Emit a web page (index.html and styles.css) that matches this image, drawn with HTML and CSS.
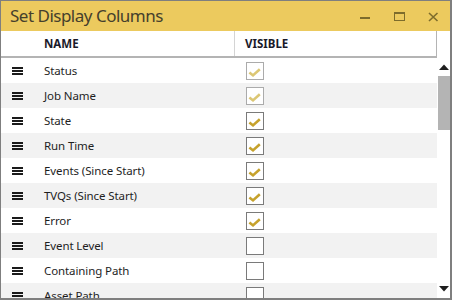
FILE: index.html
```html
<!DOCTYPE html>
<html>
<head>
<meta charset="utf-8">
<link rel="stylesheet" href="styles.css">
</head>
<body>
<div class="window">
  <div class="titlebar">
    <div class="title">Set Display Columns</div>
    <div class="controls">
      <svg class="ctl" width="11" height="10" viewBox="0 0 11 10"><rect x="0" y="5" width="10" height="2" fill="#7d6c2c"/></svg>
      <svg class="ctl" width="11" height="10" viewBox="0 0 11 10"><rect x="0.5" y="0.5" width="10" height="8" fill="none" stroke="#7d6c2c"/><rect x="0" y="0" width="11" height="2" fill="#7d6c2c"/></svg>
      <svg class="ctl" width="11" height="10" viewBox="0 0 11 10"><path d="M1 1 L9.5 9 M9.5 1 L1 9" stroke="#7d6c2c" stroke-width="1.6"/></svg>
    </div>
  </div>
  <div class="header">
    <div class="hcell hname">NAME</div>
    <div class="hcell hvis">VISIBLE</div>
  </div>
  <div class="body">
    <div class="rows">
      <div class="row"><span class="grip"></span><span class="name">Status</span><span class="cb disabled"><svg width="16" height="16" viewBox="0 0 16 16"><path d="M2.4 9.4 L6 12.4 L12.8 6.2" fill="none" stroke-width="2.6"/></svg></span></div>
      <div class="row"><span class="grip"></span><span class="name">Job Name</span><span class="cb disabled"><svg width="16" height="16" viewBox="0 0 16 16"><path d="M2.4 9.4 L6 12.4 L12.8 6.2" fill="none" stroke-width="2.6"/></svg></span></div>
      <div class="row"><span class="grip"></span><span class="name">State</span><span class="cb"><svg width="16" height="16" viewBox="0 0 16 16"><path d="M2.4 9.4 L6 12.4 L12.8 6.2" fill="none" stroke-width="2.6"/></svg></span></div>
      <div class="row"><span class="grip"></span><span class="name">Run Time</span><span class="cb"><svg width="16" height="16" viewBox="0 0 16 16"><path d="M2.4 9.4 L6 12.4 L12.8 6.2" fill="none" stroke-width="2.6"/></svg></span></div>
      <div class="row"><span class="grip"></span><span class="name">Events (Since Start)</span><span class="cb"><svg width="16" height="16" viewBox="0 0 16 16"><path d="M2.4 9.4 L6 12.4 L12.8 6.2" fill="none" stroke-width="2.6"/></svg></span></div>
      <div class="row"><span class="grip"></span><span class="name">TVQs (Since Start)</span><span class="cb"><svg width="16" height="16" viewBox="0 0 16 16"><path d="M2.4 9.4 L6 12.4 L12.8 6.2" fill="none" stroke-width="2.6"/></svg></span></div>
      <div class="row"><span class="grip"></span><span class="name">Error</span><span class="cb"><svg width="16" height="16" viewBox="0 0 16 16"><path d="M2.4 9.4 L6 12.4 L12.8 6.2" fill="none" stroke-width="2.6"/></svg></span></div>
      <div class="row"><span class="grip"></span><span class="name">Event Level</span><span class="cb"></span></div>
      <div class="row"><span class="grip"></span><span class="name">Containing Path</span><span class="cb"></span></div>
      <div class="row"><span class="grip"></span><span class="name">Asset Path</span><span class="cb"></span></div>
    </div>
    <div class="scrollbar">
      <div class="sbtn"><svg width="10" height="6" viewBox="0 0 10 6"><path d="M0 6 L5 0.5 L10 6 Z" fill="#1e1e1e"/></svg></div>
      <div class="thumb"></div>
      <div class="track"></div>
      <div class="sbtn"><svg width="10" height="6" viewBox="0 0 10 6"><path d="M0 0 L10 0 L5 5.5 Z" fill="#1e1e1e"/></svg></div>
    </div>
  </div>
</div>
</body>
</html>
```

FILE: styles.css
```css
html, body {
  margin: 0;
  padding: 0;
  background: #ffffff;
}
.window {
  width: 452px;
  height: 300px;
  box-sizing: border-box;
  border-style: solid;
  border-color: #7f7f7f;
  border-width: 1px 2px 2px 1px;
  display: flex;
  flex-direction: column;
  overflow: hidden;
  font-family: "Noto Sans", "Open Sans", sans-serif;
  background: #fff;
}
.titlebar {
  height: 30px;
  flex: none;
  background: #ecca5e;
  display: flex;
  align-items: center;
  justify-content: space-between;
}
.title {
  padding-left: 9px;
  font-size: 17px;
  color: #45402c;
  letter-spacing: -0.5px;
  line-height: 30px;
}
.controls {
  display: flex;
  align-items: center;
  gap: 23px;
  padding-right: 11px;
  padding-top: 2px;
}
.ctl {
  display: block;
}
.header {
  display: flex;
  width: 436px;
  box-sizing: border-box;
  border-right: 1px solid #b4b4b4;
  border-bottom: 2px solid #b4b4b4;
  height: 27px;
  flex: none;
}
.hcell {
  font-size: 11.5px;
  font-weight: bold;
  color: #1a1a2a;
  line-height: 25px;
}
.hname {
  width: 233px;
  padding-left: 43px;
  box-sizing: border-box;
}
.hvis {
  flex: 1;
  border-left: 1px solid #d4d4d4;
  padding-left: 10px;
}
.body {
  flex: 1;
  display: flex;
  min-height: 0;
}
.rows {
  width: 436px;
  flex: none;
  overflow: hidden;
}
.row {
  height: 25px;
  display: flex;
  align-items: center;
  font-size: 11.5px;
  letter-spacing: -0.1px;
  color: #1e1e1e;
}
.row:nth-child(even) {
  background: #f2f2f2;
}
.grip {
  width: 11px;
  height: 8px;
  margin-left: 11px;
  border-top: 2px solid #1a1a1a;
  border-bottom: 2px solid #1a1a1a;
  position: relative;
  box-sizing: border-box;
  flex: none;
}
.grip::after {
  content: "";
  position: absolute;
  left: 0;
  right: 0;
  top: 1px;
  height: 2px;
  background: #1a1a1a;
}
.name {
  margin-left: 21px;
  width: 202px;
  flex: none;
  white-space: nowrap;
}
.cb {
  width: 18px;
  height: 18px;
  box-sizing: border-box;
  border: 1px solid #7a7a7a;
  background: #fff;
  display: flex;
  align-items: center;
  justify-content: center;
  flex: none;
}
.cb svg path {
  stroke: #c6a22c;
}
.cb.disabled {
  border-color: #ababab;
}
.cb.disabled svg path {
  stroke: #dcc774;
}
.scrollbar {
  width: 13px;
  display: flex;
  flex-direction: column;
  align-items: center;
}
.sbtn {
  height: 18px;
  width: 13px;
  display: flex;
  align-items: center;
  justify-content: center;
  flex: none;
}
.thumb {
  width: 12px;
  margin-left: 1px;
  height: 54px;
  background: #b4b4b4;
  flex: none;
}
.track {
  flex: 1;
}
```
